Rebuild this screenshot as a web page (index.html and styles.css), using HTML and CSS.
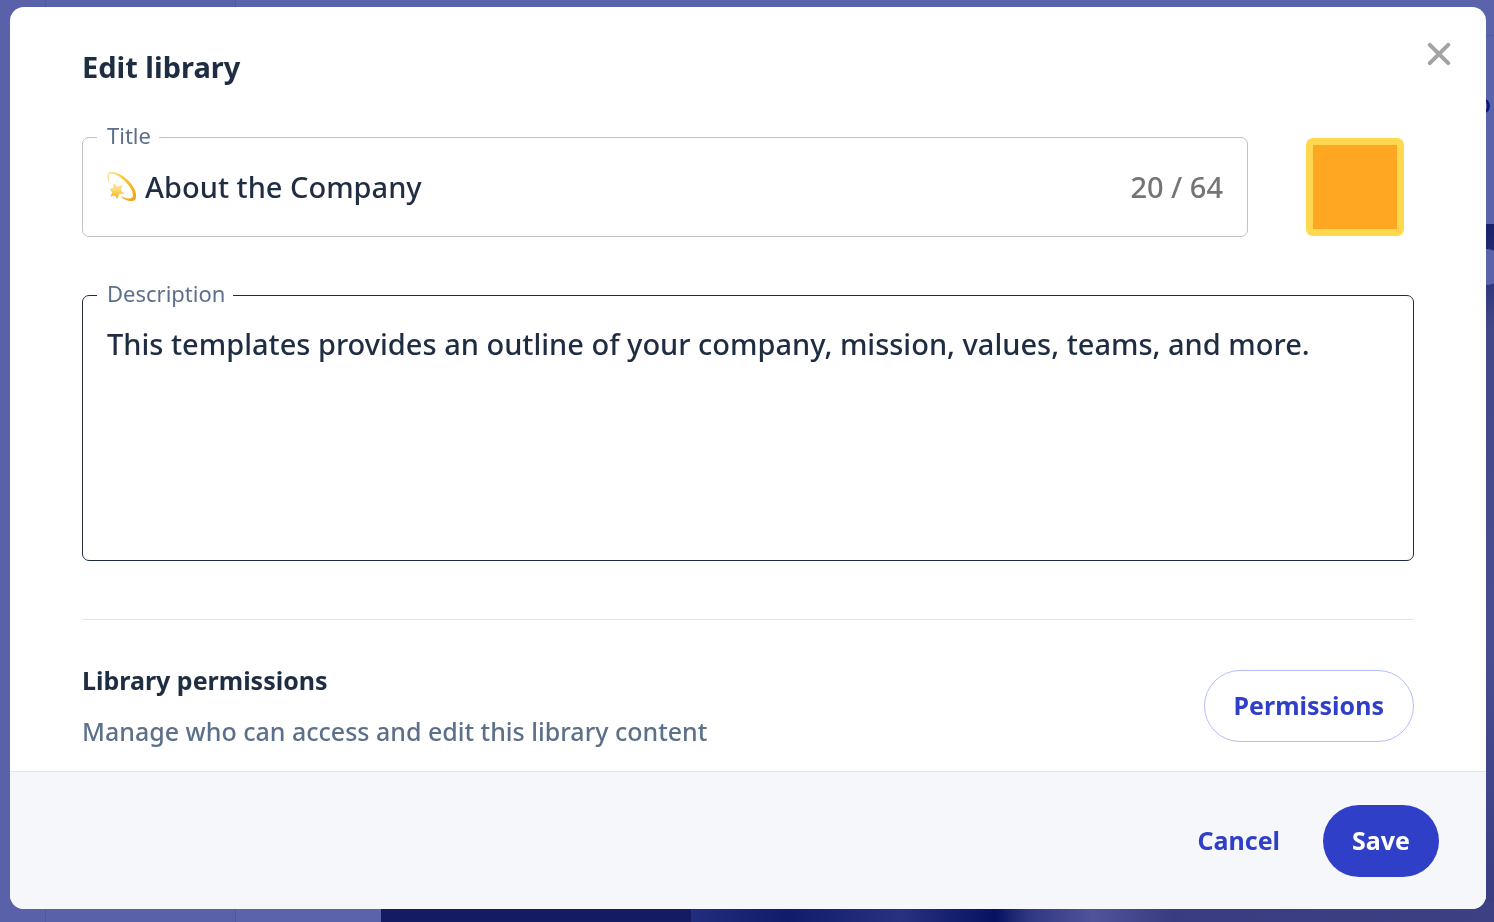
FILE: index.html
```
<!DOCTYPE html>
<html lang="en">
<head>
    <meta charset="UTF-8">
    <meta name="viewport" content="width=device-width, initial-scale=1.0">
    <title>Edit library</title>
    <link rel="stylesheet" href="styles.css">
</head>
<body>
    <!-- dimmed page behind the modal -->
    <div class="page" aria-hidden="true">
        <div class="rail"></div>
        <div class="sidebar"></div>
        <div class="content">
            <div class="topbar"></div>
            <div class="toolbar">o</div>
            <div class="hero">
                <div class="hero-photo"></div>
                <span class="hero-badge"></span>
            </div>
        </div>
    </div>

    <div class="modal" role="dialog" aria-modal="true" aria-labelledby="modalTitle">
        <header class="modal-header">
            <h1 id="modalTitle">Edit library</h1>
            <button type="button" class="close" aria-label="Close">
                <svg width="24" height="24" viewBox="0 0 24 24" fill="none" stroke="#a3a3a3" stroke-width="4" stroke-linecap="round">
                    <path d="M2.8 2.8 21.2 21.2M21.2 2.8 2.8 21.2"/>
                </svg>
            </button>
        </header>

        <form class="modal-body">
            <div class="title-row">
                <fieldset class="field">
                    <legend><label for="title">Title</label></legend>
                    <div class="field-row">
                        <svg class="emoji" width="30" height="32" viewBox="0 0 30 32" role="img" aria-label="Dizzy">
                            <defs>
                                <linearGradient id="swirl" x1="0" y1="0" x2="1" y2="1">
                                    <stop offset="0" stop-color="#fce79a"/>
                                    <stop offset="0.4" stop-color="#f9c53a"/>
                                    <stop offset="1" stop-color="#f0a30f"/>
                                </linearGradient>
                                <linearGradient id="star" x1="0" y1="0" x2="0" y2="1">
                                    <stop offset="0" stop-color="#fdf3b8"/>
                                    <stop offset="0.5" stop-color="#fbd75c"/>
                                    <stop offset="1" stop-color="#f3a915"/>
                                </linearGradient>
                            </defs>
                            <path fill="url(#swirl)" d="M1.800 11C.2 8-.1 4.300 1.200 2.500 2.900.3 7.600.7 12.400 3c6.200 3.200 11.800 8.800 14.800 14.600 2.200 4.300 2.600 9.700.6 11.500-2.400 2-8.200.8-12.800-2.200l-.4-1.700c4.200 2.300 8.300 3.200 10.300 1.600 1.800-1.600 1-5.300-1-9-3-5.300-7.600-10.200-12.600-12.900C7.300 2.600 3.700 1.900 2.300 3.700c-.9 1.400-.7 3.900.2 6.900z"/>
                            <path fill="url(#star)" stroke="#f6bb3a" stroke-width="0.5" stroke-linejoin="round" d="M7.300 13 9.700 16.600 14.600 14.800 13.300 19 16.700 22.600 12 22.300 10.200 27.600 7.800 24 3.900 25.300 5.500 21.200 3.200 18.200 6.900 17.400z"/>
                        </svg>
                        <input type="text" id="title" maxlength="64" value="About the Company">
                        <span class="counter">20 / 64</span>
                    </div>
                </fieldset>
                <button type="button" class="swatch" aria-label="Library color"></button>
            </div>

            <fieldset class="field field-dark">
                <legend><label for="description">Description</label></legend>
                <textarea id="description">This templates provides an outline of your company, mission, values, teams, and more.</textarea>
            </fieldset>

            <section class="permissions">
                <div>
                    <h2>Library permissions</h2>
                    <p>Manage who can access and edit this library content</p>
                </div>
                <button type="button" class="btn btn-outline">Permissions</button>
            </section>
        </form>

        <footer class="modal-footer">
            <button type="button" class="btn btn-text">Cancel</button>
            <button type="button" class="btn btn-primary">Save</button>
        </footer>
    </div>
</body>
</html>
```
FILE: styles.css
```
* {
    box-sizing: border-box;
}
body {
    margin: 0;
    font-family: "Noto Sans", "Open Sans", sans-serif;
    color: #1f2d43;
    background-color: #5961a9;
}
button, input, textarea {
    font-family: inherit;
    color: inherit;
}
button {
    cursor: pointer;
}

/* page behind */
.page {
    display: flex;
    height: 100vh;
    overflow: hidden;
}
.rail {
    width: 46px;
    border-right: 1px solid #5058a5;
}
.sidebar {
    width: 190px;
    border-right: 1px solid #5058a5;
}
.content {
    flex: 1;
    display: flex;
    flex-direction: column;
    background-color: #5b63ab;
}
.topbar {
    height: 36px;
    border-bottom: 1px solid #5058a5;
}
.toolbar {
    height: 188px;
    padding: 52px 3px 0 0;
    font-size: 25px;
    font-weight: 500;
    line-height: 30px;
    text-align: right;
    color: #0c1980;
}
.hero {
    flex: 1;
    position: relative;
    display: flex;
    justify-content: flex-end;
    margin-left: 145px;
    background: linear-gradient(#17206a, #434889 15%, #484d92 60%, #141b62 96%);
}
.hero-photo {
    width: 803px;
    background: linear-gradient(90deg, #232d7d, #111c6b 12%, #27317f 26%, #08135f 38%, #303782 42%, #50539a 50%, #393c80 60%, #3d4083) bottom / 100% 20px no-repeat,
        linear-gradient(#17206a, #434889 15%, #484d92 60%, #393c80);
}
.hero-badge {
    position: absolute;
    top: 25px;
    right: -10px;
    width: 36px;
    height: 36px;
    border-radius: 50%;
    background-color: #5b63ab;
}

/* modal */
.modal {
    position: fixed;
    inset: 7px 8px 13px 10px;
    display: flex;
    flex-direction: column;
    overflow: hidden;
    border-radius: 14px;
    background-color: #fff;
}
.modal-header {
    display: flex;
    justify-content: space-between;
    align-items: flex-start;
    padding: 35px 35px 0 72px;
}
h1 {
    margin: 5px 0 0;
    font-size: 29px;
    font-weight: 700;
    line-height: 40px;
}
.close {
    display: flex;
    padding: 0;
    border: none;
    background: none;
}
.modal-body {
    flex: 1;
    min-height: 0;
    padding: 35px 72px 0;
}
.title-row {
    display: flex;
    align-items: flex-end;
    gap: 58px;
    padding-right: 10px;
    margin-bottom: 43px;
}
.field {
    flex: 1;
    min-width: 0;
    margin: 0;
    padding: 0 24px;
    border: 1px solid #c2c2c2;
    border-radius: 7px;
}
.field-dark {
    border-color: #1f2d43;
}
legend {
    margin-left: -10px;
    padding: 0 8px 0 10px;
    font-size: 22px;
    line-height: 30px;
    color: #5c7089;
}
legend label {
    display: block;
    margin-top: -2px;
    padding-bottom: 2px;
}
.field-row {
    display: flex;
    align-items: center;
    gap: 8px;
    height: 84px;
    padding-bottom: 15px;
}
.emoji {
    flex-shrink: 0;
}
.field input, .field textarea {
    display: block;
    width: 100%;
    padding: 0;
    border: none;
    outline: none;
    background: none;
    font-size: 29px;
    font-weight: 500;
    line-height: 40px;
}
.field textarea {
    height: 250px;
    padding-top: 14px;
    resize: none;
}
.counter {
    flex-shrink: 0;
    font-size: 29px;
    font-weight: 500;
    line-height: 40px;
    color: #757575;
}
.swatch {
    width: 98px;
    height: 98px;
    border: 7px solid #ffd84f;
    border-radius: 7px;
    background-color: #ffa722;
    margin-bottom: 1px;
}
.permissions {
    display: flex;
    justify-content: space-between;
    align-items: flex-start;
    margin-top: 58px;
    padding-top: 50px;
    border-top: 1px solid #e3e6ea;
}
h2 {
    margin: -8px 0 15px;
    font-size: 25px;
    font-weight: 700;
    line-height: 36px;
}
.permissions p {
    margin: 0;
    font-size: 25px;
    font-weight: 500;
    line-height: 36px;
    color: #5c7089;
}
.btn {
    height: 72px;
    padding: 0 29px 2px;
    border: none;
    border-radius: 36px;
    font-size: 25px;
    font-weight: 700;
    background: none;
    color: #303fc7;
}
.btn-outline {
    border: 1px solid #b5bdfa;
}
.btn-primary {
    background-color: #303fc7;
    color: #fff;
}
.modal-footer {
    display: flex;
    justify-content: flex-end;
    gap: 14px;
    padding: 33px 47px 32px;
    border-top: 1px solid #e1e6ec;
    background-color: #f5f7fb;
}
```
